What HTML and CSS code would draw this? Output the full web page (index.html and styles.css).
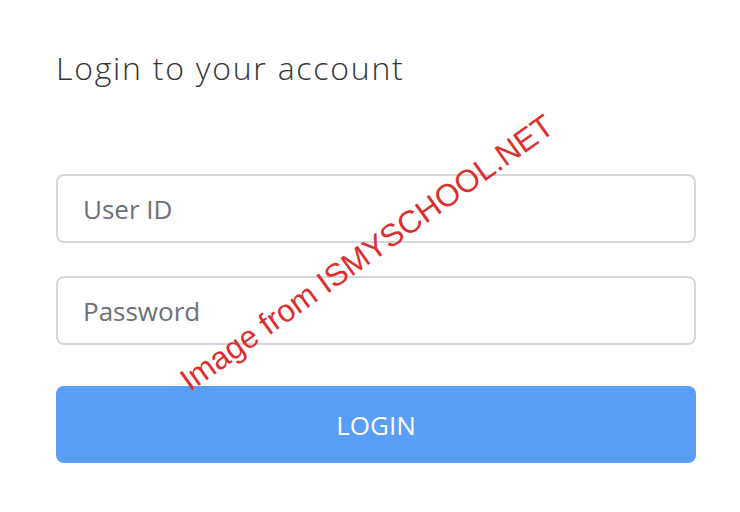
FILE: index.html
```html
<!DOCTYPE html>
<html lang="en">
<head>
    <meta charset="UTF-8">
    <meta name="viewport" content="width=device-width, initial-scale=1.0">
    <title>Login</title>
    <link rel="stylesheet" href="styles.css">
</head>
<body>

    <div class="container">
        <h2>Login to your account</h2>

        <!-- Login Form -->
        <form id="loginForm">
            <input type="text" id="userId" placeholder="User ID">
            <input type="password" id="password" placeholder="Password">
            <button type="submit">LOGIN</button>
        </form>
    </div>

    <!-- Watermark -->
    <div class="watermark">Image from ISMYSCHOOL.NET</div>

</body>
</html>
```

FILE: styles.css
```css
body {
    font-family: "Open Sans", "Noto Sans", sans-serif;
    background-color: #fff;
    margin: 0;
    padding: 0;
}

.container {
    width: 640px;
    padding: 46px 56px 0;
}

h2 {
    margin: 0 0 84px;
    font-size: 32px;
    font-weight: 300;
    line-height: 44px;
    letter-spacing: 1.75px;
    color: #333;
}

form {
    display: flex;
    flex-direction: column;
}

input {
    box-sizing: border-box;
    width: 100%;
    height: 69px;
    margin: 0 0 33px;
    padding: 0 25px;
    border: 2px solid #d3d6da;
    border-radius: 8px;
    font-family: inherit;
    font-size: 26px;
    color: #333;
    outline: none;
}

input::placeholder {
    color: #6b7079;
}

input + button {
    margin-top: 8px;
}

button {
    height: 77px;
    background: #589ef8;
    color: #fff;
    border: none;
    border-radius: 8px;
    font-family: inherit;
    font-size: 26px;
    cursor: pointer;
}

.watermark {
    position: absolute;
    left: 190px;
    top: 366px;
    font-family: "Liberation Sans", Arial, sans-serif;
    font-size: 31.5px;
    line-height: 31px;
    white-space: nowrap;
    color: #dc2f2f;
    transform-origin: 0 26px;
    transform: rotate(-35.5deg);
}
```
